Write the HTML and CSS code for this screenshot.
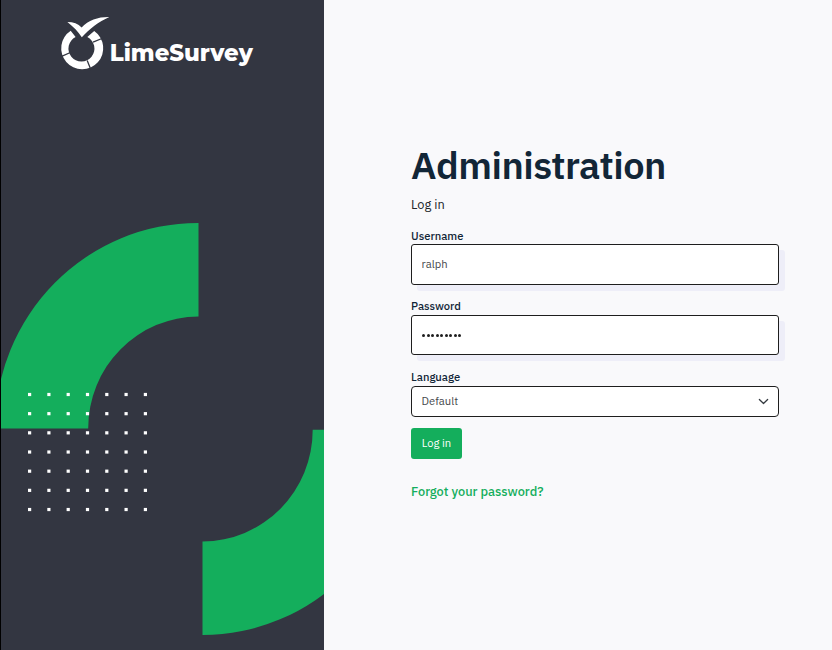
FILE: index.html
```html
<!DOCTYPE html>
<html lang="en">
<head>
<meta charset="utf-8">
<title>LimeSurvey</title>
<link rel="stylesheet" href="styles.css">
</head>
<body>
<aside class="brand">
<svg class="art" viewBox="0 0 323 650" width="323" height="650" role="img" aria-label="LimeSurvey">
  <g transform="translate(-1 0)">
    <g class="lime">
      <path d="M198.500 223V316.500A110.500 111.700 0 0 0 88.200 428.500H-5A203 205.500 0 0 1 198.500 223Z"/>
      <path d="M202.500 635V541.500A110.500 111.700 0 0 0 312.700 429.700H405A202.500 205.300 0 0 1 202.500 635Z"/>
    </g>
    <g class="white" id="dots"></g>
    <g class="white">
      <path d="M67.400 22C73.500 22 78 23.800 81.600 27.600C88.500 20 98.500 16.800 109.300 17C98.500 21.800 89.500 29 81.800 37.200C78.200 31.800 73.500 26.800 67.400 22Z"/>
      <path fill-rule="evenodd" d="M70.700 30.700A21 21 0 1 0 94.200 31L87.300 37A13 13 0 1 1 75.600 37Z"/>
    </g>
    <path class="cut" d="M93 42.200L103.200 38M87.200 60.500L91 70M71.500 52L61 56.700"/>
    <text class="logo-text" x="109.800" y="61" textLength="143" lengthAdjust="spacingAndGlyphs">LimeSurvey</text>
  </g>
</svg>
</aside>
<main class="panel">
  <h1>Administration</h1>
  <p class="sub">Log in</p>
  <form>
    <label class="l-user" for="user">Username</label>
    <input class="field" id="user" type="text" value="ralph">
    <label class="l-pass">Password</label>
    <div class="field pass"><i></i><i></i><i></i><i></i><i></i><i></i><i></i><i></i><i></i></div>
    <label class="l-lang">Language</label>
    <div class="select"><span>Default</span>
      <svg width="11" height="11" viewBox="0 0 16 16"><path d="M2 5l6 6 6-6"/></svg>
    </div>
    <button type="button">Log in</button>
  </form>
  <a class="forgot">Forgot your password?</a>
</main>
<script src="dots.js"></script>
</body>
</html>
```
FILE: styles.css
```css
* { box-sizing: border-box; }
body {
  margin: 0;
  width: 832px;
  height: 650px;
  display: flex;
  overflow: hidden;
  background: #f9f9fb;
  font-family: "IBM Plex Sans", Roboto, sans-serif;
  color: #122637;
}
.brand { width: 324px; height: 650px; border-left: 1px solid #000; background: #333641; flex: none; }
.art { display: block; }
.lime { fill: #14ae5c; }
.white { fill: #fff; }
.cut { stroke: #333641; stroke-width: 1.3; fill: none; }
.logo-text { font: 800 23px "Montserrat", "Open Sans", sans-serif; fill: #fff; }
.panel { width: 368px; margin-left: 87px; display: flex; flex-direction: column; align-items: flex-start; }
h1 { margin: 140px 0 0; height: 50px; font-size: 38px; line-height: 50px; font-weight: 600; letter-spacing: -0.52px; white-space: nowrap; }
.sub { margin: 5px 0 0; height: 20px; line-height: 20px; font-size: 12.8px; color: #212529; }
form { width: 368px; display: flex; flex-direction: column; align-items: flex-start; }
label { font-size: 11.2px; font-weight: 500; line-height: 16px; height: 16px; }
.l-user { margin-top: 13px; }
.l-pass { margin-top: 13px; }
.l-lang { margin-top: 14px; }
.field, .select {
  width: 368px;
  border: 1px solid #1e1e1e;
  border-radius: 3px;
  background: #fff;
  padding: 0 9.6px;
  font-family: inherit;
  font-size: 11.2px;
  color: #45484c;
}
.field { height: 41px; padding-bottom: 2px; box-shadow: 6px 6px 0 #eeeef8; outline: 0; }
.pass { height: 40px; margin-top: 1px; padding: 1px 0 0 10px; display: flex; align-items: center; gap: 1.5px; }
.pass i { width: 3px; height: 3px; border-radius: 50%; background: #1e1e1e; }
.select { height: 31px; margin-top: 1px; padding: 0 8.6px 1px 9.6px; display: flex; align-items: center; justify-content: space-between; border-radius: 4px; }
.select span { margin-bottom: 1px; }
.select svg { fill: none; stroke: #343a40; stroke-width: 1.8; stroke-linecap: round; stroke-linejoin: round; }
button { width: 51px; height: 31px; margin-top: 11px; padding: 0; border: 0; border-radius: 3px; background: #14ae5c; color: #fff; font: 400 11.2px/31px "IBM Plex Sans", Roboto, sans-serif; }
.forgot { margin-top: 23px; line-height: 20px; font-size: 12.8px; font-weight: 500; color: #14ae5c; }
```
FILE: dots.js
```javascript
const dots = document.getElementById("dots");
for (let row = 0; row < 7; row++) {
  for (let col = 0; col < 7; col++) {
    const dot = document.createElementNS("http://www.w3.org/2000/svg", "rect");
    dot.setAttribute("x", 28 + col * 19.3);
    dot.setAttribute("y", 392.9 + row * 19.17);
    dot.setAttribute("width", 3.2);
    dot.setAttribute("height", 3.2);
    dots.append(dot);
  }
}
```
